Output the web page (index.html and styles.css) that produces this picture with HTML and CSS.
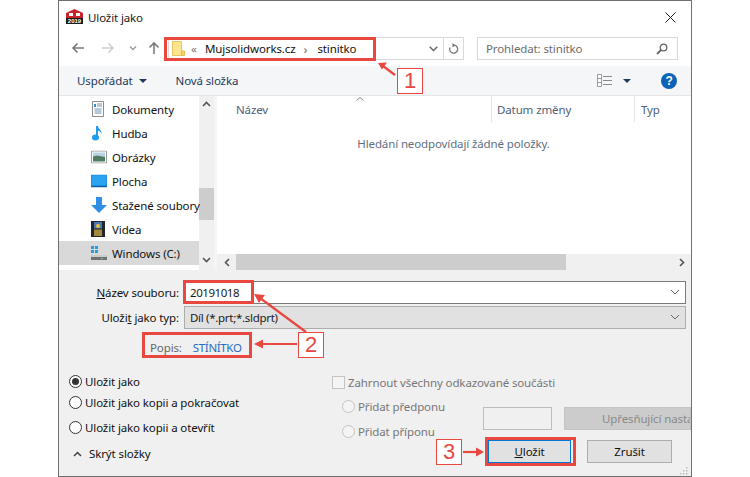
FILE: index.html
```html
<!DOCTYPE html>
<html lang="cs">
<head>
<meta charset="utf-8">
<title>Uložit jako</title>
<link rel="stylesheet" href="styles.css">
</head>
<body>
<div class="dialog">
  <header class="titlebar">
    <svg class="app-icon" width="17" height="15" viewBox="0 0 17 15"><path d="M0 4 L8.500 0 L17 4 V10 H0 Z" fill="#c8242b"/><rect x="3" y="4" width="4" height="3" fill="#fff"/><rect x="10" y="4" width="4" height="3" fill="#fff"/><rect y="9" width="17" height="6" fill="#1b1b1b"/><text x="8.500" y="14.300" class="icon-year">2019</text></svg>
    <span class="title">Uložit jako</span>
    <svg class="close" width="11" height="11" viewBox="0 0 11 11"><path d="M.5.5l10 10M10.500.5l-10 10" stroke="#222" fill="none"/></svg>
  </header>

  <div class="navbar">
    <div class="nav-buttons">
      <svg width="14" height="12" viewBox="0 0 14 12"><path d="M13 6H2M6.500 1.500L2 6l4.500 4.500" stroke="#7a7a7a" stroke-width="1.600" fill="none"/></svg>
      <svg width="14" height="12" viewBox="0 0 14 12"><path d="M1 6h11M7.500 1.500L12 6l-4.500 4.500" stroke="#cfcfcf" stroke-width="1.600" fill="none"/></svg>
      <svg width="8" height="6" viewBox="0 0 8 6"><path d="M1 1.500l3 3 3-3" stroke="#9a9a9a" stroke-width="1.400" fill="none"/></svg>
      <svg width="12" height="14" viewBox="0 0 12 14"><path d="M6 13V2M1.500 6.500L6 2l4.500 4.500" stroke="#7a7a7a" stroke-width="1.600" fill="none"/></svg>
    </div>
    <div class="address">
      <svg class="folder" width="13" height="15" viewBox="0 0 13 15"><path d="M.5.5h9v14h-9z" fill="#fde58f" stroke="#e8c560"/><path d="M9.500 10h3v4.500h-3z" fill="#f5d26b" stroke="#e2bd56"/></svg>
      <span class="crumb-sep">«</span>
      <span class="crumb">Mujsolidworks.cz</span>
      <span class="crumb-arrow">›</span>
      <span class="crumb">stinitko</span>
      <span class="spacer"></span>
      <svg class="addr-chevron" width="9" height="6" viewBox="0 0 9 6"><path d="M.7.8l3.800 3.800L8.300.8" stroke="#666" stroke-width="1.400" fill="none"/></svg>
      <span class="refresh"><svg width="11" height="12" viewBox="0 0 11 12"><path d="M6.500 2.200A4 4 0 1 1 2 4.500" stroke="#777" stroke-width="1.300" fill="none"/><path d="M4.500 0v4.500l3-2.200z" fill="#777"/></svg></span>
    </div>
    <div class="search">
      <span>Prohledat: stinitko</span>
      <svg width="12" height="12" viewBox="0 0 12 12"><circle cx="7.500" cy="4.500" r="3.300" stroke="#666" stroke-width="1.300" fill="none"/><path d="M5 7l-4 4" stroke="#666" stroke-width="1.800"/></svg>
    </div>
  </div>

  <div class="toolbar">
    <span class="tool">Uspořádat</span><span class="caret"></span>
    <span class="tool tool-new">Nová složka</span>
    <span class="spacer"></span>
    <svg class="view-icon" width="16" height="13" viewBox="0 0 16 13"><path d="M.5.500h4v12h-4zM.5 4.500h4M.5 8.500h4" stroke="#9a9a9a" fill="#fff"/><path d="M6 2.500h9M6 6.500h9M6 10.500h9" stroke="#8a8a8a"/></svg>
    <span class="caret caret-view"></span>
    <span class="help">?</span>
  </div>

  <main class="browser">
    <nav class="tree">
      <ul class="tree-list">
        <li class="tree-item">
          <svg width="14" height="16" viewBox="0 0 14 16"><path d="M1.500.5h11v15h-11z" fill="#fff" stroke="#8c8c8c"/><path d="M6 3h5M6 5h5M3.500 8h7M3.500 10h7M3.500 12h7" stroke="#6d8fb3"/><path d="M3 3h2v3H3z" fill="#3a8ad0"/></svg>
          <span>Dokumenty</span></li>
        <li class="tree-item">
          <svg width="14" height="16" viewBox="0 0 14 16"><path d="M6 1v11" stroke="#1f9bf0" stroke-width="2"/><ellipse cx="4.500" cy="12.500" rx="3.500" ry="3" fill="#1f9bf0"/><path d="M7 1c0 3 4 3.500 3.500 8C10 6.500 8 6 7 5.500z" fill="#1f9bf0"/></svg>
          <span>Hudba</span></li>
        <li class="tree-item">
          <svg width="16" height="13" viewBox="0 0 16 13"><path d="M.5.500h15v12H.5z" fill="#fff" stroke="#9a9a9a"/><path d="M2 2h12v5H2z" fill="#b9d4e4"/><path d="M2 6l4-1 8 1.500V11H2z" fill="#4f7c63"/></svg>
          <span>Obrázky</span></li>
        <li class="tree-item">
          <svg width="16" height="13" viewBox="0 0 16 13"><path d="M0 0h16v12H0z" fill="#1d8fe0"/><path d="M1 1h14v9.500H1z" fill="#2aa4f0"/><path d="M0 11.500h16V13H0z" fill="#0e5f9e"/></svg>
          <span>Plocha</span></li>
        <li class="tree-item">
          <svg width="16" height="16" viewBox="0 0 16 16"><path d="M5 0h6v8h5l-8 8-8-8h5z" fill="#2f8fe6"/></svg>
          <span>Stažené soubory</span></li>
        <li class="tree-item">
          <svg width="14" height="16" viewBox="0 0 14 16"><path d="M0 0h14v16H0z" fill="#20262c"/><path d="M3 1h8v6.500H3z" fill="#4a78b0"/><path d="M3 8.500h8V15H3z" fill="#a28a3a"/><circle cx="7" cy="5" r="2" fill="#e6c440"/></svg>
          <span>Videa</span></li>
        <li class="tree-item selected">
          <svg width="16" height="16" viewBox="0 0 16 16"><path d="M0 1h3v3H0zM4 1h3v3H4zM0 5h3v3H0zM4 5h3v3H4z" fill="#1fa0e6"/><path d="M1 10h14l1 2v3H0v-3z" fill="#6e7275"/><path d="M1 10h14l1 2H0z" fill="#c9cdd0"/><path d="M10 13h2v1h-2z" fill="#5fe05f"/></svg>
          <span>Windows (C:)</span></li>
      </ul>
      <div class="vscroll">
        <svg width="9" height="6" viewBox="0 0 9 6"><path d="M1 5l3.500-3.500L8 5" stroke="#555" stroke-width="1.600" fill="none"/></svg>
        <div class="vtrack"><div class="vthumb"></div></div>
        <svg width="9" height="6" viewBox="0 0 9 6"><path d="M1 1l3.500 3.500L8 1" stroke="#555" stroke-width="1.600" fill="none"/></svg>
      </div>
    </nav>
    <section class="files">
      <div class="file-head">
        <span class="col col-name">Název<svg class="sort" width="8" height="4" viewBox="0 0 8 4"><path d="M.5 3.500L4 .5l3.500 3" stroke="#888" fill="none"/></svg></span>
        <span class="col col-date">Datum změny</span>
        <span class="col col-type">Typ</span>
      </div>
      <p class="empty">Hledání neodpovídají žádné položky.</p>
      <div class="hscroll">
        <svg width="6" height="9" viewBox="0 0 6 9"><path d="M5 1L1.500 4.500 5 8" stroke="#555" stroke-width="1.600" fill="none"/></svg>
        <div class="htrack"><div class="hthumb"></div></div>
        <svg width="6" height="9" viewBox="0 0 6 9"><path d="M1 1l3.500 3.500L1 8" stroke="#555" stroke-width="1.600" fill="none"/></svg>
      </div>
    </section>
  </main>

  <div class="lower">
    <div class="form-row">
      <label class="form-label"><u>N</u>ázev souboru:</label>
      <div class="field field-name"><span>20191018</span><svg width="10" height="6" viewBox="0 0 10 6"><path d="M1 1l4 4 4-4" stroke="#666" fill="none"/></svg></div>
    </div>
    <div class="form-row">
      <label class="form-label">Uloži<u>t</u> jako typ:</label>
      <div class="field field-type"><span>Díl (*.prt;*.sldprt)</span><svg width="10" height="6" viewBox="0 0 10 6"><path d="M1 1l4 4 4-4" stroke="#666" fill="none"/></svg></div>
    </div>
    <div class="desc-row"><span class="desc-label">Popis:</span><span class="desc-value">STÍNÍTKO</span></div>

    <div class="options">
      <div class="save-modes">
        <div class="radio-row"><span class="radio checked"></span>Uložit jako</div>
        <div class="radio-row"><span class="radio"></span>Uložit jako kopii a pokračovat</div>
        <div class="radio-row"><span class="radio"></span>Uložit jako kopii a otevřít</div>
        <div class="hide-folders"><svg width="9" height="6" viewBox="0 0 9 6"><path d="M1 5l3.500-3.500L8 5" stroke="#444" stroke-width="1.500" fill="none"/></svg>Skrýt složky</div>
      </div>
      <div class="refs">
        <div class="check-row"><span class="checkbox"></span>Zahrnout všechny odkazované součásti</div>
        <div class="refs-low">
          <div class="affix">
            <div class="radio-row off"><span class="radio"></span>Přidat předponu</div>
            <div class="radio-row off"><span class="radio"></span>Přidat příponu</div>
          </div>
          <div class="right-col">
            <div class="adv-row">
              <div class="blank-input"></div>
              <div class="adv-btn"><span>Upřesňující nastavení</span></div>
            </div>
            <div class="actions">
              <button class="btn btn-default"><u>U</u>ložit</button>
              <button class="btn btn-cancel">Zrušit</button>
            </div>
          </div>
        </div>
      </div>
    </div>
    <svg class="grip" width="9" height="9" viewBox="0 0 9 9"><path d="M7 1h1.500v1.500H7zM4 4h1.500v1.500H4zM7 4h1.500v1.500H7zM1 7h1.500v1.500H1zM4 7h1.500v1.500H4zM7 7h1.500v1.500H7z" fill="#bdbdbd"/></svg>
  </div>

  <div class="mark mark-addr"></div>
  <div class="mark mark-file"></div>
  <div class="mark mark-desc"></div>
  <div class="mark mark-save"></div>
  <div class="num num-1">1</div>
  <div class="num num-2">2</div>
  <div class="num num-3">3</div>
  <svg class="arrows" width="750" height="477" viewBox="0 0 750 477">
    <g stroke="#e8483f" stroke-width="2.200" fill="none"><path d="M395 75L383 66"/><path d="M306 332L260 298"/><path d="M297 344H262"/><path d="M463 452H477"/></g>
    <g fill="#e8483f"><path d="M378 63l9-.5-5 7z"/><path d="M254 294l11 1-6 8z"/><path d="M254 344l9-4.500v9z"/><path d="M484 452l-8-4.500v9z"/></g>
  </svg>
</div>
</body>
</html>
```

FILE: styles.css
```css
* { box-sizing: border-box; }
html, body { margin: 0; padding: 0; }
body { background: #fff; font-family: "Noto Sans", "Open Sans", sans-serif; font-size: 11.5px; letter-spacing: -.12px; color: #1a1a1a; width: 750px; height: 477px; overflow: hidden; padding-left: 58px; }
.dialog { width: 634px; height: 477px; border: 1px solid #707070; background: #fff; display: flex; flex-direction: column; overflow: hidden; position: relative; }
.spacer { flex: 1; }

.titlebar { height: 32px; flex: none; display: flex; align-items: center; padding: 0 15px 0 7px; }
.app-icon { flex: none; margin-top: -1px; }
.icon-year { font: bold 6px "Liberation Sans", sans-serif; fill: #fff; text-anchor: middle; letter-spacing: 0; }
.title { margin-left: 5px; }
.close { margin-left: auto; }

.navbar { height: 33px; flex: none; display: flex; align-items: flex-start; padding: 4px 13px 0 12px; }
.nav-buttons { width: 97px; height: 22px; display: flex; align-items: center; flex: none; }
.nav-buttons svg:nth-child(2) { margin-left: 16px; }
.nav-buttons svg:nth-child(3) { margin-left: 14px; }
.nav-buttons svg:nth-child(4) { margin-left: 11px; }
.address { width: 296px; height: 23px; border: 1px solid #d9d9d9; display: flex; align-items: center; padding-left: 3px; flex: none; }
.folder { flex: none; }
.crumb-sep { margin-left: 6px; color: #777; width: 9px; }
.crumb { color: #111; margin-left: 5px; }
.crumb-arrow { color: #777; margin-left: 8px; margin-right: 5px; font-size: 13px; }
.addr-chevron { margin-right: 5px; flex: none; }
.refresh { width: 20px; height: 21px; border-left: 1px solid #d9d9d9; display: flex; align-items: center; justify-content: center; }
.search { margin-left: 13px; width: 202px; height: 23px; border: 1px solid #d9d9d9; display: flex; align-items: center; justify-content: space-between; padding: 0 9px 0 8px; color: #6d6d6d; }

.toolbar { height: 30px; flex: none; background: #f5f6f7; border-bottom: 1px solid #e5e5e5; display: flex; align-items: center; padding: 0 14px 0 18px; color: #1e395b; }
.caret { width: 0; height: 0; border-left: 4px solid transparent; border-right: 4px solid transparent; border-top: 4px solid #1e395b; margin-left: 6px; }
.tool-new { margin-left: 29px; }
.view-icon { flex: none; }
.caret-view { margin-left: 10px; }
.help { width: 16px; height: 16px; border-radius: 50%; background: #0a63b8; color: #fff; font: bold 12px/16px "Liberation Sans", sans-serif; text-align: center; margin-left: 30px; }

.browser { height: 174px; flex: none; display: flex; }
.tree { width: 155px; flex: none; display: flex; }
.tree-list { list-style: none; margin: 0; padding: 0 0 5px; width: 140px; flex: none; display: flex; flex-direction: column; justify-content: flex-end; }
.tree-item { height: 24px; flex: none; display: flex; align-items: center; padding-left: 32px; color: #111; white-space: nowrap; position: relative; }
.tree-item svg { position: absolute; left: 32px; top: 50%; transform: translateY(-50%); }
.tree-item span { margin-left: 21px; }
.tree-item.selected { background: #d9d9d9; }
.vscroll { width: 15px; height: 174px; background: #f0f0f0; display: flex; flex-direction: column; align-items: center; padding: 5px 0 7px; }
.vtrack { flex: 1; width: 15px; padding-top: 81px; }
.vthumb { height: 32px; background: #cdcdcd; }

.files { flex: 1; min-width: 0; border-left: 3px solid #f5f5f5; display: flex; flex-direction: column; position: relative; }
.file-head { height: 26px; flex: none; display: flex; color: #4e6079; }
.col { height: 26px; padding: 6px 0 0 19px; position: relative; }
.col-name { width: 274px; }
.col-date { width: 143px; border-left: 1px solid #e5e5e5; padding-left: 5px; }
.col-type { flex: 1; border-left: 1px solid #e5e5e5; padding-left: 6px; }
.sort { position: absolute; left: 139px; top: 1px; }
.empty { margin: 14px 0 0; flex: 1; text-align: center; color: #5f6f82; padding-right: 1px; }
.hscroll { height: 16px; flex: none; background: #f0f0f0; display: flex; align-items: center; padding: 0 6px 0 7px; }
.htrack { flex: 1; height: 16px; padding-left: 6px; }
.hthumb { width: 330px; height: 16px; background: #cdcdcd; }

.lower { flex: 1; background: #f0f0f0; position: relative; padding: 11px 5px 0 0; }
.form-row { display: flex; align-items: center; height: 22px; margin-bottom: 3px; }
.form-label { width: 120px; text-align: right; color: #111; flex: none; }
.field { margin-left: 5px; flex: 1; height: 23px; border: 1px solid #7a7a7a; display: flex; align-items: center; justify-content: space-between; padding: 0 5px; }
.field-name { background: #fff; }
.field-name span { letter-spacing: -.45px; }
.field-type { background: #e1e1e1; border-color: #adadad; }
.field-type span { letter-spacing: -.3px; }
.desc-row { display: flex; height: 22px; align-items: center; margin-top: 8px; padding-left: 91px; }
.desc-label { color: #666; }
.desc-value { color: #2b6cc4; margin-left: 11px; letter-spacing: -.35px; }

.options { display: flex; margin-top: 12px; }
.save-modes { width: 273px; flex: none; padding-left: 10px; }
.radio-row { display: flex; align-items: center; height: 23px; color: #111; }
.save-modes .radio-row:nth-child(2) { margin-top: -2px; }
.save-modes .radio-row:nth-child(3) { margin-top: 2px; }
.radio { width: 13px; height: 13px; border: 1px solid #333; border-radius: 50%; background: #fff; margin-right: 3px; flex: none; position: relative; }
.radio.checked::after { content: ""; position: absolute; left: 2px; top: 2px; width: 7px; height: 7px; background: #333; border-radius: 50%; }
.hide-folders { display: flex; align-items: center; height: 29px; padding-left: 4px; color: #111; }
.hide-folders svg { margin-right: 7px; }

.refs { flex: 1; min-width: 0; color: #777; padding-top: 5px; }
.check-row { display: flex; align-items: center; height: 14px; }
.checkbox { width: 13px; height: 13px; border: 1px solid #c4c4c4; background: #f4f4f4; margin-right: 3px; flex: none; }
.refs-low { display: flex; margin-top: 4px; }
.affix { width: 151px; padding-left: 10px; flex: none; padding-top: 1px; }
.radio-row.off { color: #777; height: 25px; }
.radio-row.off .radio { border-color: #c4c4c4; background: #f4f4f4; }
.right-col { flex: 1; min-width: 0; }
.adv-row { display: flex; height: 23px; margin-top: 14px; margin-right: -5px; }
.blank-input { width: 69px; height: 23px; border: 1px solid #bdbdbd; flex: none; }
.adv-btn { margin-left: 12px; flex: 1; min-width: 0; height: 23px; background: #cccccc; border: 1px solid #c4c4c4; color: #8a8a8a; display: flex; align-items: center; padding-left: 37px; overflow: hidden; white-space: nowrap; }
.actions { display: flex; margin-top: 10px; padding-left: 5px; }
.btn { height: 23px; font: 11.5px "Noto Sans", "Open Sans", sans-serif; letter-spacing: -.12px; color: #111; background: #e1e1e1; border: 1px solid #adadad; padding: 0; }
.btn-default { width: 83px; border-color: #0078d7; }
.btn-cancel { width: 85px; margin-left: 16px; }
.grip { position: absolute; right: 3px; bottom: 1px; }

.mark { position: absolute; border: 3px solid #e8483f; pointer-events: none; }
.mark-addr { left: 105px; top: 36px; width: 212px; height: 24px; }
.mark-file { left: 124px; top: 279px; width: 71px; height: 24px; }
.mark-desc { left: 83px; top: 331px; width: 110px; height: 26px; }
.mark-save { left: 426px; top: 436px; width: 91px; height: 29px; }
.num { position: absolute; width: 26px; height: 26px; border: 1px solid #e8483f; background: #fff; color: #e8483f; font: 22px/24px "Liberation Sans", sans-serif; letter-spacing: 0; text-align: center; }
.num-1 { left: 338px; top: 67px; }
.num-2 { left: 239px; top: 331px; }
.num-3 { left: 377px; top: 438px; }
.arrows { position: absolute; left: -59px; top: -1px; pointer-events: none; }
```
